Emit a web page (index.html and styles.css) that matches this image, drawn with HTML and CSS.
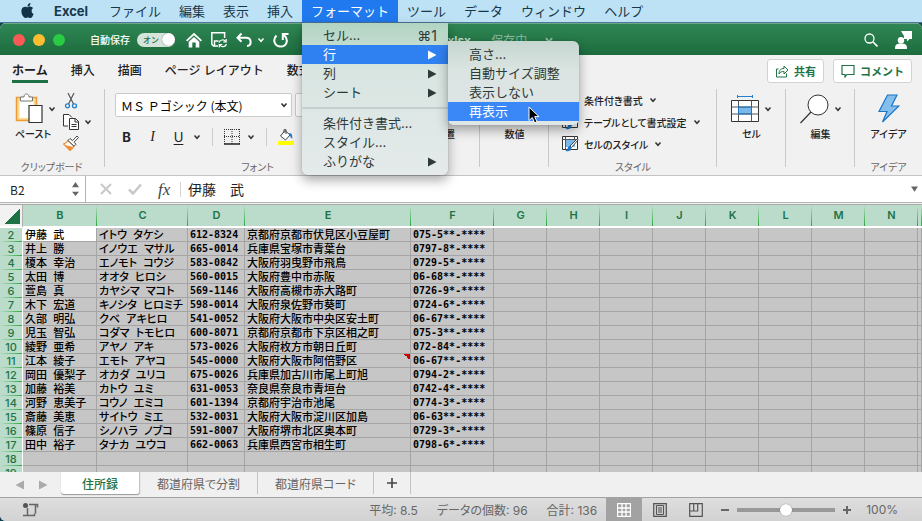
FILE: index.html
```
<!DOCTYPE html>
<html lang="ja">
<head>
    <meta charset="UTF-8">
    <meta name="viewport" content="width=device-width, initial-scale=1.0">
    <title>住所録.xlsx</title>
    <link rel="stylesheet" href="styles.css">
</head>
<body>
    <svg class="defs" aria-hidden="true">
        <symbol id="chev" viewBox="0 0 8 8"><path d="M1.5 2.5L4 5.3l2.500-2.800" fill="none" stroke="currentColor" stroke-width="1.500"/></symbol>
        <symbol id="tri" viewBox="0 0 10 10"><path d="M1 0.500L9.500 5L1 9.500z" fill="currentColor"/></symbol>
        <symbol id="cellstyle" viewBox="0 0 17 16">
            <path d="M.5.5h15v13H.5z" fill="#fff" stroke="#333"/>
            <path d="M4 4h9v7H4z" fill="#7ab8ea"/>
            <path d="M.5 3.500h15M3.500.5v13M12.500.5v3" stroke="#555" fill="none"/>
            <path d="M15.500 2.500L8 10l1.500 1.500L16 4z" fill="#fff" stroke="#333" stroke-width=".9"/>
            <path d="M8 10c-2 0-2.500 2-2.500 3L3.500 15c3 .8 6 0 6-3.500z" fill="#1b77c5"/>
        </symbol>
    </svg>

    <!-- メニューバー -->
    <nav class="menubar">
        <svg class="apple" viewBox="0 0 24 24"><path fill="#123247" d="M12.152 6.896c-.948 0-2.415-1.078-3.960-1.040-2.040.027-3.910 1.183-4.961 3.014-2.117 3.675-.546 9.103 1.519 12.090 1.013 1.454 2.208 3.090 3.792 3.039 1.520-.065 2.090-.987 3.935-.987 1.831 0 2.350.987 3.960.948 1.637-.026 2.676-1.480 3.676-2.948 1.156-1.688 1.636-3.325 1.662-3.415-.039-.013-3.182-1.221-3.220-4.857-.026-3.040 2.480-4.494 2.597-4.559-1.429-2.090-3.623-2.324-4.390-2.376-2-.156-3.675 1.090-4.610 1.090zM15.530 3.830c.843-1.012 1.400-2.427 1.245-3.830-1.207.052-2.662.805-3.532 1.818-.780.896-1.454 2.338-1.273 3.714 1.338.104 2.715-.688 3.559-1.701"/></svg>
        <button class="app-name">Excel</button>
        <button>ファイル</button>
        <button>編集</button>
        <button>表示</button>
        <button>挿入</button>
        <div class="menu-open">
            <button class="active">フォーマット</button>
            <div class="menu">
                <button>セル...<kbd>⌘1</kbd></button>
                <div class="has-sub">
                    <button class="selected">行<svg><use href="#tri"/></svg></button>
                    <div class="menu submenu">
                        <button>高さ...</button>
                        <button>自動サイズ調整</button>
                        <button>表示しない</button>
                        <button class="selected">再表示</button>
                        <svg class="cursor" viewBox="0 0 12 18"><path d="M1 1v13.500l3.300-3 2.300 5.300 2.400-1-2.300-5.200h4.300z" fill="#000" stroke="#fff"/></svg>
                    </div>
                </div>
                <button>列<svg><use href="#tri"/></svg></button>
                <button>シート<svg><use href="#tri"/></svg></button>
                <hr>
                <button>条件付き書式...</button>
                <button>スタイル...</button>
                <button>ふりがな<svg><use href="#tri"/></svg></button>
            </div>
        </div>
        <button>ツール</button>
        <button>データ</button>
        <button>ウィンドウ</button>
        <button>ヘルプ</button>
    </nav>

    <div class="window">
        <header class="titlebar">
            <div class="title-left">
                <i class="light red"></i><i class="light yellow"></i><i class="light green"></i>
                <label class="autosave">自動保存 <input type="checkbox" checked><span class="switch">オン</span></label>
                <svg class="tool" viewBox="0 0 16 16"><path d="M0 8.300L8 .7l8 7.600-1.200 1.300L8 3.300 1.200 9.600z" fill="#fff"/><path d="M2.700 9.800L8 5l5.300 4.800V15.500H9.700v-5H6.300v5H2.700z" fill="#fff"/></svg>
                <svg class="tool save" viewBox="0 0 16 16"><path d="M7 14H2.500L.8 12.300V.8h12.800V6M3.500 14V9h4" fill="none" stroke="#fff" stroke-width="1.500"/><path d="M8 10.700c.7-3 5-3.800 6.500-1.200M15.200 7v3h-3M15.500 12c-1 3-5 3.500-6.500 1M8.300 15.500v-3h3" fill="none" stroke="#fff" stroke-width="1.200"/></svg>
                <svg class="tool undo" viewBox="0 0 16 16"><path d="M5.500 1.500L1.500 5.800l4 4M2 5.800h8c6 0 6 7.700 1 8.200" fill="none" stroke="#fff" stroke-width="2"/></svg>
                <svg class="chev light-chev"><use href="#chev"/></svg>
                <svg class="tool redo" viewBox="0 0 16 16"><path d="M3.500 3.500C-1 8 2 14.500 7.500 14.500c6.500 0 8.500-7 3.500-11.500M15.500 2H9.800V8" fill="none" stroke="#fff" stroke-width="2"/></svg>
            </div>
            <div class="doc-title">
                <span>住所録.xlsx</span><span class="saving">— 保存中</span>
                <svg class="chev saving"><use href="#chev"/></svg>
            </div>
            <div class="title-right">
                <svg class="search" viewBox="0 0 14 14"><circle cx="5.500" cy="5.500" r="4.500" fill="none" stroke="#fff" stroke-width="1.300"/><path d="M9 9l4.500 4.500" stroke="#fff" stroke-width="1.600"/></svg>
                <svg class="person" viewBox="0 0 17 18"><path d="M6 0h11v8h-2.500L12 10.500V8H9V5z" fill="#fff"/><circle cx="6" cy="9.200" r="3.200" fill="#fff"/><path d="M0 18c0-5 2-5.500 6-5.500s6 .5 6 5.500z" fill="#fff"/></svg>
            </div>
        </header>

        <div class="tabs">
            <button class="current">ホーム</button>
            <button>挿入</button>
            <button>描画</button>
            <button>ページ レイアウト</button>
            <button>数式</button>
            <div class="actions">
                <button><svg viewBox="0 0 14 14"><path d="M3.500 5H1.500v8h10V9.500M4 10c0-4 2-5.500 5-5.500V2l4 4-4 4V7.500C6.500 7.500 5 8 4 10z" fill="none" stroke="currentColor"/></svg>共有</button>
                <button><svg viewBox="0 0 14 14"><path d="M1 1.500h12v9H6L4 13v-2.500H1z" fill="none" stroke="currentColor" stroke-width="1.200"/></svg>コメント</button>
            </div>
        </div>

        <!-- リボン -->
        <div class="ribbon">
            <section class="group clipboard">
                <div class="tools">
                    <button class="big">
                        <span class="pic"><svg class="paste" viewBox="0 0 28 31"><path d="M1.500 4.500h20v23h-20z" fill="#fbd98d" stroke="#ee9a38" stroke-width="1.500"/><path d="M4.500 8h14v17h-14z" fill="#fff"/><path d="M5.500 8V4H9c0-4 5-4 5 0h3.500v4z" fill="#fff" stroke="#777"/><path d="M14 12.500h13v17H14z" fill="#fff" stroke="#333" stroke-width="1.200"/></svg><svg class="chev"><use href="#chev"/></svg></span>
                        ペースト
                    </button>
                    <div class="stack">
                        <button aria-label="切り取り"><svg viewBox="0 0 16 16"><path d="M5 0l5.500 11M11 0L5.500 11" stroke="#555" stroke-width="1.200" fill="none"/><circle cx="4.500" cy="12.800" r="2" fill="none" stroke="#2280cc" stroke-width="1.300"/><circle cx="11.500" cy="12.800" r="2" fill="none" stroke="#2280cc" stroke-width="1.300"/></svg></button>
                        <button aria-label="コピー"><svg viewBox="0 0 16 16"><path d="M5 12H.5V.5H6l3 3" fill="#fff" stroke="#333"/><path d="M6.500 4.500h6l3 3v8h-9z" fill="#fff" stroke="#333"/><path d="M12 4.500v3.500h3.500M8.500 10.500h5M8.500 12.500h5" fill="none" stroke="#333"/></svg><svg class="chev"><use href="#chev"/></svg></button>
                        <button aria-label="書式のコピー"><svg viewBox="0 0 16 16"><path d="M5 5.500l6 5.500c-1 2-2 3-4 4.500L.5 9C2 8.500 4 7.500 5 5.500z" fill="#fff" stroke="#ec8a2f" stroke-width="1.200"/><path d="M2 10l5 5 3-3z" fill="#f08b32"/><path d="M5 5.500l2-2 2.500 2.200L14 1l1.500 1.500-4.500 4.700 2 2-2 2z" fill="#fff" stroke="#444"/></svg></button>
                    </div>
                </div>
                <h2>クリップボード</h2>
            </section>
            <section class="group font">
                <div class="tools">
                    <div class="font-row">
                        <select class="font-name" aria-label="フォント名"><option>ＭＳ Ｐゴシック (本文)</option></select>
                        <select class="font-size" aria-label="サイズ"><option>11</option></select>
                    </div>
                    <div class="format-row">
                        <button class="b">B</button>
                        <button class="i">I</button>
                        <button class="u">U</button>
                        <svg class="chev"><use href="#chev"/></svg>
                        <i class="sep"></i>
                        <button aria-label="罫線"><svg viewBox="0 0 16 16"><path d="M0 .5h16M.5 0v15M15.500 0v15M8 0v15M0 7.500h16" stroke="#333" stroke-dasharray="1 1" fill="none"/><path d="M0 15h16" stroke="#222" stroke-width="1.500"/></svg></button>
                        <svg class="chev"><use href="#chev"/></svg>
                        <i class="sep"></i>
                        <button aria-label="塗りつぶし"><svg viewBox="0 0 16 16"><path d="M7 1.500L12 6 7.500 11 2.500 7z" fill="#fff" stroke="#444"/><path d="M6 4V1c0-1.300 2-1.300 2 0v4" fill="none" stroke="#444"/><path d="M11 4.500c3-1 3.500 2 3.300 5-2 0-2-3-3.300-5z" fill="#2280cc"/><path d="M0 12h16v4H0z" fill="#ff0"/></svg></button>
                        <svg class="chev"><use href="#chev"/></svg>
                    </div>
                </div>
                <h2>フォント</h2>
            </section>
            <section class="group align"><div class="tools"><button class="big"><span class="pic"></span>配置</button></div></section>
            <section class="group narrow"><div class="tools"><button class="big"><span class="pic"></span>数値</button></div></section>
            <section class="group style">
                <div class="tools">
                    <button><svg class="ico"><use href="#cellstyle"/></svg>条件付き書式<svg class="chev"><use href="#chev"/></svg></button>
                    <button><svg class="ico"><use href="#cellstyle"/></svg>テーブルとして書式設定<svg class="chev"><use href="#chev"/></svg></button>
                    <button><svg class="ico"><use href="#cellstyle"/></svg>セルのスタイル<svg class="chev"><use href="#chev"/></svg></button>
                </div>
                <h2>スタイル</h2>
            </section>
            <section class="group narrow">
                <div class="tools"><button class="big">
                    <span class="pic"><svg class="cells" viewBox="0 0 28 28"><path d="M6.500 1.500h15M6.500 0v3M21.500 0v3" stroke="#2280cc" fill="none"/><path d="M.5 5.500h27v21H.5z" fill="#fff" stroke="#333"/><path d="M7.500 12h13v7h-13z" fill="#7ab8ea"/><path d="M.5 12h27M.5 19h27M7.500 5.500v21M20.500 5.500v21" stroke="#555" fill="none"/><path d="M7.500 12h13v7h-13z" fill="none" stroke="#1b77c5"/></svg><svg class="chev"><use href="#chev"/></svg></span>
                    セル
                </button></div>
            </section>
            <section class="group narrow">
                <div class="tools"><button class="big">
                    <span class="pic"><svg class="find" viewBox="0 0 29 30"><circle cx="18" cy="11" r="10" fill="#fff" stroke="#333"/><path d="M11 18L.5 29" stroke="#333" stroke-width="1.200"/></svg><svg class="chev"><use href="#chev"/></svg></span>
                    編集
                </button></div>
            </section>
            <section class="group idea">
                <div class="tools"><button class="big">
                    <span class="pic"><svg class="bolt" viewBox="0 0 22 29"><path d="M9.500 1h9.500l-5.500 11H21L4.500 28 9 17.500H1z" fill="#83beec" stroke="#1b77c5" stroke-width="1.200"/></svg></span>
                    アイデア
                </button></div>
                <h2>アイデア</h2>
            </section>
        </div>

        <div class="formula-bar">
            <label class="name-box"><input type="text" value="B2" aria-label="名前ボックス"><svg viewBox="0 0 8 18"><path d="M4 1l4 6H0zM4 17l4-5H0z" fill="#666"/></svg></label>
            <button class="fx-btn" aria-label="キャンセル"><svg viewBox="0 0 14 12"><path d="M2 1l10 10M12 1L2 11" stroke="#c8c8c8" stroke-width="2"/></svg></button>
            <button class="fx-btn" aria-label="入力"><svg viewBox="0 0 14 12"><path d="M1 6.500l4 4L13 1.500" fill="none" stroke="#c8c8c8" stroke-width="2.500"/></svg></button>
            <span class="fx">fx</span>
            <input class="formula" type="text" value="伊藤　武" aria-label="数式">
            <button class="expand" aria-label="展開"><svg viewBox="0 0 8 6"><path d="M0 0h8L4 6z" fill="#666"/></svg></button>
        </div>

        <main class="sheet">
            <table>
                <colgroup>
                    <col class="c-head"><col class="c-b"><col class="c-c"><col class="c-d"><col class="c-e"><col class="c-f">
                    <col class="c-std" span="8"><col>
                </colgroup>
                <thead>
                    <tr><th class="corner"></th><th>B</th><th>C</th><th>D</th><th>E</th><th>F</th><th>G</th><th>H</th><th>I</th><th>J</th><th>K</th><th>L</th><th>M</th><th>N</th><th></th></tr>
                </thead>
                <tbody id="rows"></tbody>
            </table>
        </main>

        <div class="sheet-tabs">
            <button class="arrow" aria-label="前"><svg class="flip"><use href="#tri"/></svg></button>
            <button class="arrow" aria-label="次"><svg><use href="#tri"/></svg></button>
            <button class="sheet-tab current">住所録</button>
            <button class="sheet-tab">都道府県で分割</button>
            <button class="sheet-tab">都道府県コード</button>
            <button class="sheet-tab add" aria-label="シートの追加"><svg viewBox="0 0 10 10"><path d="M5 0v10M0 5h10" stroke="#444" stroke-width="1.600"/></svg></button>
        </div>

        <footer class="status">
            <svg class="macro" viewBox="0 0 16 14"><circle cx="2.500" cy="2.500" r="2.500" fill="#555"/><path d="M6 1.500h8.500v3M12.500 1.500v9M4.500 5v7.500H0M4.500 12.500h7v-2" fill="none" stroke="#666" stroke-width="1.500"/></svg>
            <span>平均: 8.5</span>
            <span>データの個数: 96</span>
            <span>合計: 136</span>
            <div class="views">
                <button class="on" aria-label="標準"><svg viewBox="0 0 14 14"><path d="M.5.5h13v13H.5zM5 0v14M9 0v14M0 5h14M0 9h14" fill="none" stroke="#fff" stroke-width="1.300"/></svg></button>
                <button aria-label="ページ レイアウト"><svg viewBox="0 0 14 14"><path d="M.7.700h12.600v12.600H.7z" fill="#ccc" stroke="#555" stroke-width="1.200"/><path d="M3.500 2.500h7v9h-7zM5 5h4M5 7h4M5 9h4" fill="none" stroke="#555"/></svg></button>
                <button aria-label="改ページ"><svg viewBox="0 0 14 14"><path d="M.7.700h12.600v12.600H.7zM.7 8h8V.7M4.700.7V8" fill="none" stroke="#555" stroke-width="1.200"/></svg></button>
            </div>
            <button class="zoom-btn" aria-label="縮小"><svg viewBox="0 0 8 8"><path d="M0 4h8" stroke="#666" stroke-width="2"/></svg></button>
            <input class="zoom" type="range" min="0" max="200" value="100" aria-label="ズーム">
            <button class="zoom-btn" aria-label="拡大"><svg viewBox="0 0 8 8"><path d="M0 4h8M4 0v8" stroke="#666" stroke-width="2"/></svg></button>
            <span class="percent">100%</span>
        </footer>
    </div>
    <script src="script.js"></script>
</body>
</html>
```
FILE: styles.css
```
* {
    box-sizing: border-box;
}
body {
    margin: 0;
    height: 100vh;
    display: flex;
    flex-direction: column;
    font-family: Inter, "Noto Sans CJK JP", sans-serif;
    font-size: 10px;
    color: #222;
    background: #12414f;
    overflow: hidden;
}
button {
    margin: 0;
    padding: 0;
    border: 0;
    background: none;
    font: inherit;
    color: inherit;
    white-space: nowrap;
}
svg {
    display: block;
    flex: none;
}
.defs {
    position: absolute;
    width: 0;
    height: 0;
}
.chev {
    width: 8px;
    height: 8px;
    color: #333;
}

/* メニューバー */
.menubar {
    display: flex;
    flex: none;
    height: 23px;
    padding-left: 20px;
    background: #bde2f5;
    border-bottom: 1px solid #4f7698;
    font-size: 13px;
    line-height: 22px;
    color: #17384c;
}
.menubar > button,
.menu-open > button {
    height: 22px;
    padding: 0 9px;
}
.apple {
    width: 15px;
    height: 15px;
    margin: 3px 10px 0 0;
}
.menubar .app-name {
    font-weight: 700;
    width: 55px;
    text-align: left;
}
.menu-open {
    position: relative;
}
.menu-open > .active {
    display: block;
    background: #2079ee;
    color: #fff;
}
.menu {
    position: absolute;
    top: 23px;
    left: 0;
    z-index: 10;
    width: 146px;
    padding: 3px 0 4px;
    border-radius: 0 0 6px 6px;
    background: linear-gradient(#b1d4c2, #c6ddd2 18%, #d8e5e1 30%, #e5eaeb);
    box-shadow: 0 5px 12px rgba(0, 0, 0, 0.35), 0 0 1px rgba(0, 0, 0, 0.4);
    color: #2c3a3a;
}
.menu button {
    display: flex;
    align-items: center;
    width: 100%;
    height: 19px;
    padding: 0 11px 0 21px;
    line-height: 19px;
}
.menu button.selected {
    background: #2f80f0;
    color: #fff;
}
.menu kbd {
    margin-left: auto;
    font: inherit;
    font-size: 14px;
}
.menu button svg {
    width: 10px;
    height: 10px;
    margin-left: auto;
}
.menu hr {
    height: 2px;
    margin: 5px 0;
    border: 0;
    background: #c6cfcf;
}
.has-sub {
    position: relative;
}
.submenu {
    top: -4px;
    left: 146px;
    width: 131px;
    padding: 4px 0;
    border-radius: 0 6px 6px 6px;
    background: linear-gradient(#c5d6cf, #dbe4e2 35%, #dfe7e6);
}
.submenu button.selected {
    background: #3a88f7;
}
.cursor {
    position: absolute;
    left: 80px;
    top: 65px;
    width: 12px;
    height: 18px;
}

/* ウィンドウ */
.window {
    flex: 1;
    min-height: 0;
    display: flex;
    flex-direction: column;
    border-radius: 6px 6px 0 6px;
    overflow: hidden;
    background: #f2f1f1;
}
.titlebar {
    display: grid;
    grid-template-columns: 1fr auto 1fr;
    align-items: center;
    flex: none;
    height: 32px;
    background: linear-gradient(#2f8654, #1d6c3d);
    border-top: 1px solid #6aa985;
    color: #fff;
}
.title-left,
.title-right,
.doc-title {
    display: flex;
    align-items: center;
}
.title-left {
    padding-left: 13px;
}
.light {
    width: 12px;
    height: 12px;
    margin-right: 8px;
    border-radius: 50%;
}
.red {
    background: #fc5b55;
}
.yellow {
    background: #fdbd2e;
}
.green {
    background: #28cb42;
}
.autosave {
    display: flex;
    align-items: center;
    gap: 7px;
    margin: 0 11px 0 17px;
    font-weight: 500;
}
.autosave input {
    position: absolute;
    opacity: 0;
}
.switch {
    display: flex;
    align-items: center;
    width: 38px;
    height: 14px;
    padding-left: 6px;
    border-radius: 7px;
    background: #d5e4db;
    color: #1f6b3e;
    font-size: 8px;
}
.switch::after {
    content: '';
    width: 13px;
    height: 13px;
    margin-left: auto;
    border-radius: 50%;
    background: #fff;
    box-shadow: 0 0 1px #444;
}
.tool {
    width: 16px;
    height: 16px;
    margin-right: 9px;
}
.light-chev {
    color: #fff;
    margin-right: 8px;
}
.undo {
    margin-right: 5px;
}
.doc-title {
    gap: 5px;
    padding-left: 40px;
    font-size: 12px;
    font-weight: 600;
    color: #c9decf;
}
.doc-title .saving {
    font-weight: 400;
    color: #8dbaa0;
}
.doc-title .chev {
    width: 10px;
    height: 10px;
    margin-left: 12px;
}
.title-right {
    justify-content: flex-end;
    gap: 17px;
    padding-right: 10px;
}
.search {
    width: 14px;
    height: 14px;
}
.person {
    width: 17px;
    height: 18px;
}

/* タブ */
.tabs {
    display: flex;
    flex: none;
    gap: 23px;
    height: 33px;
    padding: 4px 10px 0 12px;
    font-size: 12px;
    font-weight: 500;
}
.tabs > button {
    height: 24px;
    border-bottom: 3px solid transparent;
    line-height: 23px;
}
.tabs > .current {
    border-color: #1e7145;
    font-weight: 700;
}
.actions {
    display: flex;
    gap: 9px;
    margin-left: auto;
}
.actions button {
    display: flex;
    align-items: center;
    gap: 5px;
    height: 24px;
    padding: 0 7px;
    border: 1px solid #d2d2d2;
    border-radius: 3px;
    background: #fff;
    color: #217346;
    font-size: 11px;
    font-weight: 600;
}
.actions svg {
    width: 14px;
    height: 14px;
}

/* リボン */
.ribbon {
    display: flex;
    flex: none;
    height: 88px;
    border-bottom: 1px solid #c4c4c4;
    font-weight: 500;
    font-feature-settings: "palt";
}
.group {
    position: relative;
    display: flex;
    flex-direction: column;
    flex: none;
    width: 69px;
    padding-top: 5px;
}
.group:not(:last-child)::after {
    content: '';
    position: absolute;
    right: 0;
    top: 1px;
    bottom: 8px;
    width: 1px;
    background: #c9c9c9;
}
.group h2 {
    margin: auto 0 0;
    text-align: center;
    font-size: 10px;
    font-weight: 400;
    line-height: 15px;
    color: #666;
}
.group button {
    display: flex;
    align-items: center;
}
.clipboard {
    width: 105px;
}
.clipboard h2 {
    padding-right: 2px;
}
.font {
    flex: 1;
}
.align {
    width: 70px;
}
.style {
    width: 168px;
}
.idea {
    width: 67px;
}
.group .big {
    flex-direction: column;
    width: 100%;
    gap: 3px;
    line-height: 14px;
}
.pic {
    display: flex;
    align-items: center;
    gap: 5px;
    height: 31px;
}
.clipboard .tools {
    display: flex;
    padding-left: 15px;
}
.clipboard .big {
    width: 41px;
    align-items: flex-start;
}
.paste {
    width: 28px;
    height: 31px;
}
.stack {
    display: flex;
    flex-direction: column;
    gap: 5px;
    padding-left: 7px;
}
.stack button {
    gap: 5px;
}
.stack svg:first-child,
.format-row button svg {
    width: 16px;
    height: 16px;
}
.cells {
    width: 28px;
    height: 28px;
}
.find {
    width: 29px;
    height: 30px;
}
.bolt {
    width: 22px;
    height: 29px;
}
.font .tools {
    padding-left: 10px;
}
.font-row {
    display: flex;
    gap: 3px;
}
.font-row select {
    height: 24px;
    padding: 0 5px;
    border: 1px solid #ccc;
    border-radius: 2px;
    appearance: none;
    background: #fff;
    font: 12px "Noto Sans CJK JP", sans-serif;
}
.font-row .font-name {
    width: 177px;
    background: #fff url("data:image/svg+xml,%3Csvg xmlns='http://www.w3.org/2000/svg' viewBox='0 0 8 8'%3E%3Cpath d='M1.5 2.5L4 5.300 6.500 2.500' fill='none' stroke='%23333' stroke-width='1.500'/%3E%3C/svg%3E") no-repeat right 3px center / 8px 8px;
}
.format-row {
    display: flex;
    align-items: center;
    height: 40px;
    gap: 11px;
    padding-left: 4px;
}
.format-row .b,
.format-row .i,
.format-row .u {
    justify-content: center;
    width: 15px;
    font-size: 13px;
    font-weight: 700;
}
.format-row .i {
    font-family: "Liberation Serif", serif;
    font-style: italic;
    font-weight: 400;
    font-size: 14px;
}
.format-row .u {
    font-weight: 400;
    text-decoration: underline;
    text-underline-offset: 2px;
}
.format-row button + .chev {
    margin-left: -4px;
}
.sep {
    width: 1px;
    height: 18px;
    background: #ccc;
}
.style {
    padding-top: 1px;
}
.style .tools {
    padding-left: 13px;
}
.style button {
    height: 22px;
}
.style .chev {
    margin-left: 6px;
}
.ico {
    width: 17px;
    height: 16px;
    margin-right: 5px;
}

/* 数式バー */
.formula-bar {
    display: flex;
    align-items: center;
    flex: none;
    height: 27px;
    background: #fff;
    border-bottom: 1px solid #b4b4b4;
}
.formula-bar input {
    min-width: 0;
    border: 0;
    outline: 0;
    padding: 0;
    background: none;
    color: #222;
}
.name-box {
    display: flex;
    align-items: center;
    width: 86px;
    height: 100%;
    padding: 0 6px 0 10px;
    border-right: 1px solid #b4b4b4;
}
.name-box input {
    flex: 1;
    font: 12px "Noto Sans CJK JP", sans-serif;
}
.name-box svg {
    width: 7px;
    height: 18px;
}
.fx-btn {
    margin-left: 13px;
}
.fx-btn svg {
    width: 14px;
    height: 12px;
}
.fx-btn + .fx-btn {
    margin-left: 15px;
}
.fx {
    width: 23px;
    margin-left: 16px;
    border-right: 1px solid #d4d4d4;
    font: italic 17px/15px "Liberation Serif", serif;
    color: #444;
}
.formula-bar .formula {
    flex: 1;
    padding-left: 7px;
    font: 14px "Noto Sans CJK JP", sans-serif;
}
.expand svg {
    width: 7px;
    height: 6px;
    margin-right: 4px;
}

/* シート */
.sheet {
    flex: 1;
    min-height: 0;
    margin-top: 1px;
    border-top: 1px solid #aaa;
    overflow: hidden;
    background: #c6c6c6;
}
.sheet table {
    width: 100%;
    table-layout: fixed;
    border-collapse: separate;
    border-spacing: 0;
}
.c-head {
    width: 23px;
}
.c-b {
    width: 74px;
}
.c-c {
    width: 91px;
}
.c-d {
    width: 57px;
}
.c-e {
    width: 166px;
}
.c-f {
    width: 83px;
}
.c-std {
    width: 53px;
}
.sheet th {
    padding: 0;
    background-color: #bbdcca;
    color: #217346;
    font: 600 11px/13px Inter, sans-serif;
}
.sheet thead th {
    height: 23px;
    background: linear-gradient(#bbdcca, #2aa83c) no-repeat right top / 1px 21px #bbdcca;
    border-bottom: 2px solid #fff;
}
.sheet thead .corner {
    background: linear-gradient(135deg, transparent 50%, #1e7145 50%) no-repeat 5px 4px / 15px 15px #f2f2f2;
    border-right: 1px solid #b0b0b0;
}
.sheet tbody th {
    height: 14px;
    border-right: 1px solid #fff;
    font-weight: 500;
    background: linear-gradient(90deg, #bbdcca, #2aa83c) no-repeat left bottom / 22px 1px #bbdcca;
}
.sheet td {
    height: 14px;
    padding: 0 0 0 2px;
    border-right: 1px solid #a5a5a5;
    border-bottom: 1px solid #a5a5a5;
    font: 500 11px/13px "Noto Sans CJK JP", sans-serif;
    color: #000;
    white-space: pre;
}
.sheet .kana {
    font-feature-settings: "palt";
}
.sheet .code {
    font: 700 10px/13px "DejaVu Sans Mono", monospace;
}
.sheet .cursor-cell {
    background: #fff;
}
.sheet .note {
    background: linear-gradient(45deg, transparent 50%, #c00 50%) no-repeat right top / 6px 6px;
}

/* シート見出し */
.sheet-tabs {
    display: flex;
    flex: none;
    height: 26px;
    padding-left: 15px;
    border-bottom: 1px solid #a3a3a3;
    background: #f0f0f0;
    font-size: 12px;
    color: #666;
}
.arrow {
    width: 23px;
}
.arrow svg {
    width: 10px;
    height: 10px;
    color: #aaa;
}
.flip {
    transform: scaleX(-1);
}
.sheet-tab {
    height: 22px;
    padding: 0 17px;
    border-right: 1px solid #c4c4c4;
    font-feature-settings: "palt";
}
.sheet-tab.current {
    width: 79px;
    background: #fff;
    border-radius: 0 0 3px 3px;
    box-shadow: 0 1px 1px #999;
    color: #217346;
    font-weight: 500;
}
.sheet-tab.add {
    padding: 0 13px;
}
.add svg {
    width: 10px;
    height: 10px;
}

/* ステータスバー */
.status {
    display: flex;
    align-items: center;
    justify-content: flex-end;
    flex: none;
    gap: 19px;
    height: 23px;
    padding-right: 24px;
    background: linear-gradient(#dedede, #d2d2d2);
    font-size: 12px;
    font-feature-settings: "palt";
    color: #666;
}
.macro {
    width: 16px;
    height: 14px;
    margin: 0 auto 0 23px;
}
.views {
    display: flex;
    align-self: stretch;
    margin-left: -10px;
}
.views button {
    width: 36px;
    padding: 0 11px;
}
.views .on {
    background: #a2a2a2;
}
.views svg {
    width: 14px;
    height: 14px;
}
.zoom-btn svg {
    width: 8px;
    height: 8px;
}
.views + .zoom-btn {
    margin-left: -12px;
}
.zoom {
    width: 98px;
    height: 12px;
    margin: 0 -11px;
    appearance: none;
    background: linear-gradient(#999, #999) no-repeat center / 98px 4px;
}
.zoom::-webkit-slider-thumb {
    appearance: none;
    width: 12px;
    height: 12px;
    border-radius: 50%;
    background: #fff;
    box-shadow: 0 0 1px #555;
}
.percent {
    margin-left: -4px;
}
```
FILE: script.js
```
const people = [
    ['伊藤 武', 'イトウ タケシ', '612-8324', '京都府京都市伏見区小豆屋町', '075-5**-****'],
    ['井上 勝', 'イノウエ マサル', '665-0014', '兵庫県宝塚市青葉台', '0797-8*-****'],
    ['榎本 幸治', 'エノモト コウジ', '583-0842', '大阪府羽曳野市飛鳥', '0729-5*-****'],
    ['太田 博', 'オオタ ヒロシ', '560-0015', '大阪府豊中市赤阪', '06-68**-****'],
    ['萱島 真', 'カヤシマ マコト', '569-1146', '大阪府高槻市赤大路町', '0726-9*-****'],
    ['木下 宏道', 'キノシタ ヒロミチ', '598-0014', '大阪府泉佐野市葵町', '0724-6*-****'],
    ['久部 明弘', 'クベ アキヒロ', '541-0052', '大阪府大阪市中央区安土町', '06-67**-****'],
    ['児玉 智弘', 'コダマ トモヒロ', '600-8071', '京都府京都市下京区相之町', '075-3**-****'],
    ['綾野 亜希', 'アヤノ アキ', '573-0026', '大阪府枚方市朝日丘町', '072-84*-****'],
    ['江本 綾子', 'エモト アヤコ', '545-0000', '大阪府大阪市阿倍野区', '06-67**-****'],
    ['岡田 優梨子', 'オカダ ユリコ', '675-0026', '兵庫県加古川市尾上町旭', '0794-2*-****'],
    ['加藤 裕美', 'カトウ ユミ', '631-0053', '奈良県奈良市青垣台', '0742-4*-****'],
    ['河野 恵美子', 'コウノ エミコ', '601-1394', '京都府宇治市池尾', '0774-3*-****'],
    ['斎藤 美恵', 'サイトウ ミエ', '532-0031', '大阪府大阪市淀川区加島', '06-63**-****'],
    ['篠原 信子', 'シノハラ ノブコ', '591-8007', '大阪府堺市北区奥本町', '0729-3*-****'],
    ['田中 裕子', 'タナカ ユウコ', '662-0063', '兵庫県西宮市相生町', '0798-6*-****']
];
const classes = ['', 'kana', 'code', '', 'code'];
const body = document.getElementById('rows');

// 2行目から19行目まで、B〜O列
for (let n = 2; n <= 19; n++) {
    const tr = document.createElement('tr');
    const th = document.createElement('th');
    th.textContent = n;
    tr.appendChild(th);
    for (let c = 0; c < 14; c++) {
        const td = document.createElement('td');
        const person = people[n - 2];
        if (person && c < 5) {
            td.textContent = person[c].replace(' ', '\u2002\u200a');
            td.className = classes[c];
        }
        if (n === 2 && c === 0) td.className = 'cursor-cell';
        if (n === 11 && c === 3) td.className = 'note';
        tr.appendChild(td);
    }
    body.appendChild(tr);
}
```
